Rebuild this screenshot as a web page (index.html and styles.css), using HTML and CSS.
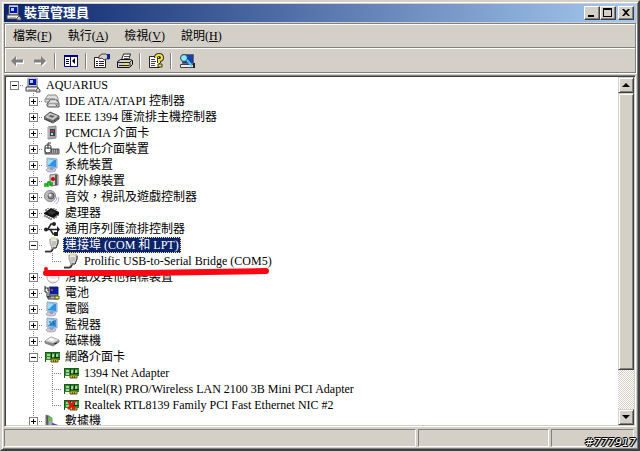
FILE: index.html
```html
<!DOCTYPE html>
<html lang="zh-Hant">

<head>
    <meta charset="UTF-8">
    <meta name="viewport" content="width=device-width, initial-scale=1">
    <title>裝置管理員</title>
    <link rel="stylesheet" href="styles.css">
</head>

<body>
    <!-- Icon shapes, reused through <use> -->
    <svg class="icon-defs" aria-hidden="true">
        <symbol id="i-pc" viewBox="0 0 16 16">
            <path d="M3 1h9v9H3z" fill="#d4d0c8" stroke="#666"/>
            <path d="M4 2h7v6H4z" fill="#0010c0"/>
            <path d="M5 3h3v3H5z" fill="#b0d0ff"/>
            <path d="M1 10h12v4H1z" fill="#eee" stroke="#444"/>
            <path d="M3 13h7" stroke="#777"/>
            <path d="M13 11l2 2v2h-4v-2z" fill="#ccc" stroke="#555"/>
            <path d="M3 1h9" stroke="#fff"/>
        </symbol>
        <symbol id="i-ide" viewBox="0 0 16 16">
            <path d="M1 6l3-4h8l2 3v4H1z" fill="#ddd" stroke="#888"/>
            <path d="M2 6h9" stroke="#777"/>
            <path d="M3 11l3-4h7l2 3v4H5l-2-1z" fill="#ccc" stroke="#555"/>
            <path d="M4 11h10" stroke="#777"/>
            <path d="M6 8h6M5 12h6" stroke="#fff"/>
            <path d="M12 12h1v1h-1z" fill="#080"/>
        </symbol>
        <symbol id="i-1394" viewBox="0 0 16 16">
            <path d="M0 8l6-5 9 4v3l-6 4-9-4z" fill="#777" stroke="#555"/>
            <path d="M1 8l5-4 8 3-5 4z" fill="#ccc"/>
            <path d="M4 7l3-1 4 1-3 2z" fill="#666"/>
            <path d="M2 10l6 3M10 12l4-3" stroke="#222" stroke-dasharray="1 1"/>
        </symbol>
        <symbol id="i-pcmcia" viewBox="0 0 16 16">
            <path d="M4 2l8-1v12l-8 1z" fill="#aaa" stroke="#888"/>
            <path d="M6 4h5v7H6z" fill="#345"/>
            <path d="M7 5h3v2H7z" fill="#b33"/>
            <path d="M7 8h2v2H7z" fill="#ccd"/>
            <path d="M4 2v11" stroke="#ddd"/>
        </symbol>
        <symbol id="i-hid" viewBox="0 0 16 16">
            <path d="M1 8h14v5H1z" fill="#aaa" stroke="#555"/>
            <path d="M7 9h8M7 11h8" stroke="#333" stroke-dasharray="1 1"/>
            <path d="M1 6q0-2 2-2h2q2 0 2 2v4q0 2-3 2t-3-2z" fill="#fff" stroke="#333"/>
            <path d="M4 4v4M1 7h6M4 4V2h3" fill="none" stroke="#333"/>
        </symbol>
        <symbol id="i-monitor" viewBox="0 0 16 16">
            <ellipse cx="7" cy="13" rx="5" ry="2" fill="#ccd" stroke="#aab"/>
            <path d="M6 10h3v3H6z" fill="#99b"/>
            <path d="M3 1l10 1v9L3 10z" fill="#b8d4ec" stroke="#8ab"/>
            <path d="M4 2l8 1v7L4 9z" fill="#2d93e8"/>
            <path d="M4 2l6 1-5 5H4z" fill="#a0dcff"/>
        </symbol>
        <symbol id="i-display" viewBox="0 0 16 16">
            <use href="#i-monitor"/>
            <path d="M5 5h5M6 7h5" stroke="#345" stroke-dasharray="2 1"/>
        </symbol>
        <symbol id="i-ir" viewBox="0 0 16 16">
            <path d="M6 2l6-1 2 1v10l-7 1-1-1z" fill="#ccc" stroke="#777"/>
            <path d="M12 2v10" stroke="#555" stroke-width="2"/>
            <circle cx="9" cy="6" r="2" fill="#c00"/>
            <path d="M1 14v-3h2v2h1v-4h2v3h2v-3" fill="none" stroke="#0a0" stroke-width="1.500"/>
        </symbol>
        <symbol id="i-sound" viewBox="0 0 16 16">
            <circle cx="6" cy="7" r="5.500" fill="#bbb" stroke="#888"/>
            <circle cx="7" cy="7" r="3" fill="#888" stroke="#555"/>
            <circle cx="6" cy="6" r="1.500" fill="#eee"/>
            <path d="M10 13q3-1 3-5M12 15q3-2 3-7" fill="none" stroke="#aac"/>
        </symbol>
        <symbol id="i-cpu" viewBox="0 0 16 16">
            <path d="M0 8l7-5 8 4v2l-6 4-9-4z" fill="#111"/>
            <path d="M3 8l4-3 5 2-4 3z" fill="#333"/>
            <path d="M1 10v2M3 11v2M5 12v2M7 13v2M10 12v2M12 11v2M14 9v2M4 4V3M2 6V4M10 4V3M12 5V4" stroke="#222"/>
        </symbol>
        <symbol id="i-usb" viewBox="0 0 16 16">
            <path d="M1 8.500h12M4 8l3-5h3M6 8l3 5h3" fill="none" stroke="#222" stroke-width="1.500"/>
            <circle cx="2" cy="8.500" r="2" fill="#222"/>
            <circle cx="10" cy="3" r="2" fill="#222"/>
            <path d="M13 5l3 3.500-3 3.500zM10 11h4v4h-4z" fill="#222"/>
        </symbol>
        <symbol id="i-plug" viewBox="0 0 16 16">
            <path d="M1 14.500h5q2 0 3-3" fill="none" stroke="#333" stroke-width="2"/>
            <path d="M1 13.500h5q1 0 2-3" fill="none" stroke="#bbb"/>
            <path d="M6 2h8v4l-2 5H8L6 6z" fill="#d8d6cc" stroke="#999"/>
            <path d="M7 0h5v2H7z" fill="#e6e2a8"/>
            <path d="M7 3h5" stroke="#fff"/>
            <path d="M9 4v5M11 4v4" stroke="#aaa"/>
            <path d="M14 3v3l-2 5H9" fill="none" stroke="#333"/>
        </symbol>
        <symbol id="i-mouse" viewBox="0 0 16 16">
            <ellipse cx="9" cy="8" rx="6" ry="6" fill="#e6e6e6" stroke="#aaa"/>
            <path d="M4 9q4 4 10 1" fill="none" stroke="#fff" stroke-width="2"/>
        </symbol>
        <symbol id="i-battery" viewBox="0 0 16 16">
            <path d="M5 2h9v8H5z" fill="#ccc" stroke="#334"/>
            <path d="M6 2h8v7H6z" fill="#0020a0"/>
            <path d="M7 4h2v2H7z" fill="#d33"/>
            <path d="M4 11h10v3H4z" fill="#bbb" stroke="#334"/>
            <path d="M1 1v6h2v5h4M1 3h3v3" fill="none" stroke="#222"/>
            <path d="M11 11h4v3h-4z" fill="#ee3" stroke="#553"/>
        </symbol>
        <symbol id="i-disk" viewBox="0 0 16 16">
            <path d="M1 8l6-4 8 3v2l-6 4-8-3z" fill="#888" stroke="#888"/>
            <path d="M1 8l6-4 8 3-6 3z" fill="#ddd"/>
            <path d="M4 7l3-2 4 2-3 1z" fill="#fff"/>
            <path d="M10 11l3-1" stroke="#222"/>
        </symbol>
        <symbol id="i-net" viewBox="0 0 16 16">
            <path d="M1 3h15v8H1z" fill="#2e8c2e"/>
            <path d="M1 3.500h15M1.500 3v10" fill="none" stroke="#1b5a1b"/>
            <path d="M3 5h3v2H3zM3 8h3v2H3zM8 5h2v3H8zM12 5h2v3h-2z" fill="#a4d494"/>
            <path d="M7.500 4v7M11.500 4v4M10 8.500h6" stroke="#083808"/>
            <path d="M7 10h7v3H7z" fill="#d8c030" stroke="#4c5a10"/>
            <path d="M9.500 11v2M11.500 11v2" stroke="#665500"/>
        </symbol>
        <symbol id="i-net-off" viewBox="0 0 16 16">
            <use href="#i-net"/>
            <path d="M5 4l7 8M12 4l-7 8" stroke="#e81010" stroke-width="2.500"/>
        </symbol>
        <symbol id="i-modem" viewBox="0 0 16 16">
            <path d="M2 2l3 1v10l-3-1z" fill="#555" stroke="#777"/>
            <path d="M5 3l3 2v5l6 3-2 3-8-2z" fill="#aab" stroke="#889"/>
            <circle cx="6" cy="6" r="2" fill="#5c3"/>
            <path d="M8 11l6 2" stroke="#558" stroke-width="2"/>
        </symbol>
        <symbol id="i-back" viewBox="0 0 16 16">
            <path d="M3 9l5-5v3h7v4H8v3z" fill="#fff"/>
            <path d="M2 8l5-5v3.500h7v3H7V13z" fill="#808080"/>
        </symbol>
        <symbol id="i-forward" viewBox="0 0 16 16">
            <path d="M15 9l-5-5v3H3v4h7v3z" fill="#fff"/>
            <path d="M14 8L9 3v3.500H2v3h7V13z" fill="#808080"/>
        </symbol>
        <symbol id="i-pane" viewBox="0 0 16 16">
            <path d="M1.500 2.500h13v11h-13z" fill="#fff" stroke="#000080"/>
            <path d="M1 3h14" stroke="#000080" stroke-width="2"/>
            <path d="M7.500 2v12" stroke="#000080"/>
            <path d="M3 6.500h3M3 8.500h3M3 10.500h3" stroke="#000"/>
            <path d="M12 5v6L9 8z" fill="#000"/>
        </symbol>
        <symbol id="i-props" viewBox="0 0 16 16">
            <path d="M.5 4.500h11v10H.5z" fill="#fff" stroke="#222"/>
            <path d="M2 8.500h2M5 8.500h5M2 10.500h2M5 10.500h5M2 12.500h2M5 12.500h5" stroke="#222"/>
            <path d="M5 3l3-2h4l1 1h2v4h-3l-2 1-2-2-3 1z" fill="#d4d0c8" stroke="#444"/>
            <path d="M13 1h3v5h-3z" fill="#0a2a90"/>
        </symbol>
        <symbol id="i-print" viewBox="0 0 16 16">
            <path d="M4.500 7l2-6h7l-2 6z" fill="#fff" stroke="#222"/>
            <path d="M7 3.500h5M7 5.500h4" stroke="#555"/>
            <path d="M.5 8.500l3-2h10l2 1v4l-3 3H.5z" fill="#ccc" stroke="#111"/>
            <path d="M1 9.500h12v4M13 9l2-2M2 12.500h10" fill="none" stroke="#222"/>
            <path d="M8 10h3v2H8z" fill="#ee0"/>
        </symbol>
        <symbol id="i-help" viewBox="0 0 16 16">
            <path d="M1.500 3.500h10v11h-10z" fill="#fff" stroke="#222"/>
            <path d="M3 6.500h4M3 8.500h5M3 10.500h4M3 12.500h4" stroke="#444"/>
            <path d="M8 5q0-3 3-3t3 3q0 2-3 2v3" fill="none" stroke="#333" stroke-width="4"/>
            <path d="M10 11h4v3h-4z" fill="#f5e43c" stroke="#333"/>
            <path d="M8 5q0-3 3-3t3 3q0 2-3 2v3" fill="none" stroke="#f5e43c" stroke-width="2"/>
        </symbol>
        <symbol id="i-scan" viewBox="0 0 16 16">
            <path d="M3.500 1.500h11v9h-11z" fill="#1440b0" stroke="#666"/>
            <path d="M1.500 11.500h13v3h-13z" fill="#eee" stroke="#444"/>
            <circle cx="5" cy="5" r="3.500" fill="#8ce8f4" stroke="#246"/>
            <path d="M8 7l5 6" stroke="#55c8f0" stroke-width="2"/>
            <path d="M15 10v5" stroke="#222" stroke-width="2"/>
        </symbol>
    </svg>

    <div class="window">
        <header class="title-bar">
            <svg class="icon"><use href="#i-pc"/></svg>
            <h1>裝置管理員</h1>
            <div class="window-buttons">
                <button type="button" aria-label="最小化"><svg viewBox="0 0 12 10"><path d="M2 7h6v2H2z"/></svg></button>
                <button type="button" aria-label="最大化"><svg viewBox="0 0 12 10"><path d="M1 0h9v9H1zM2 2v6h7V2z" fill-rule="evenodd"/></svg></button>
                <button type="button" class="close" aria-label="關閉"><svg viewBox="0 0 12 10"><path d="M2 1h2l2 2 2-2h2L7 4.500 10 8H8L6 6 4 8H2l3-3.500z"/></svg></button>
            </div>
        </header>

        <div class="bars">
            <nav class="menu-bar">
                <button type="button">檔案(<u>F</u>)</button>
                <button type="button">執行(<u>A</u>)</button>
                <button type="button">檢視(<u>V</u>)</button>
                <button type="button">說明(<u>H</u>)</button>
            </nav>
            <div class="tool-bar">
                <div class="tool-group">
                    <button type="button" aria-label="上一頁"><svg class="icon"><use href="#i-back"/></svg></button>
                    <button type="button" aria-label="下一頁"><svg class="icon"><use href="#i-forward"/></svg></button>
                </div>
                <div class="tool-group">
                    <button type="button" aria-label="顯示樹狀目錄"><svg class="icon"><use href="#i-pane"/></svg></button>
                </div>
                <div class="tool-group">
                    <button type="button" aria-label="內容"><svg class="icon"><use href="#i-props"/></svg></button>
                    <button type="button" aria-label="列印"><svg class="icon"><use href="#i-print"/></svg></button>
                </div>
                <div class="tool-group">
                    <button type="button" aria-label="說明"><svg class="icon"><use href="#i-help"/></svg></button>
                </div>
                <div class="tool-group">
                    <button type="button" aria-label="掃描硬體變更"><svg class="icon"><use href="#i-scan"/></svg></button>
                </div>
            </div>
        </div>

        <main class="view">
            <div class="tree-pane">
                <ul class="tree">
                    <li>
                        <div class="row"><button type="button" class="toggle open" aria-label="收合"></button><svg class="icon"><use href="#i-pc"/></svg><span class="label">AQUARIUS</span></div>
                        <ul>
                            <li><div class="row"><button type="button" class="toggle" aria-label="展開"></button><svg class="icon"><use href="#i-ide"/></svg><span class="label">IDE ATA/ATAPI 控制器</span></div></li>
                            <li><div class="row"><button type="button" class="toggle" aria-label="展開"></button><svg class="icon"><use href="#i-1394"/></svg><span class="label">IEEE 1394 匯流排主機控制器</span></div></li>
                            <li><div class="row"><button type="button" class="toggle" aria-label="展開"></button><svg class="icon"><use href="#i-pcmcia"/></svg><span class="label">PCMCIA 介面卡</span></div></li>
                            <li><div class="row"><button type="button" class="toggle" aria-label="展開"></button><svg class="icon"><use href="#i-hid"/></svg><span class="label">人性化介面裝置</span></div></li>
                            <li><div class="row"><button type="button" class="toggle" aria-label="展開"></button><svg class="icon"><use href="#i-monitor"/></svg><span class="label">系統裝置</span></div></li>
                            <li><div class="row"><button type="button" class="toggle" aria-label="展開"></button><svg class="icon"><use href="#i-ir"/></svg><span class="label">紅外線裝置</span></div></li>
                            <li><div class="row"><button type="button" class="toggle" aria-label="展開"></button><svg class="icon"><use href="#i-sound"/></svg><span class="label">音效，視訊及遊戲控制器</span></div></li>
                            <li><div class="row"><button type="button" class="toggle" aria-label="展開"></button><svg class="icon"><use href="#i-cpu"/></svg><span class="label">處理器</span></div></li>
                            <li><div class="row"><button type="button" class="toggle" aria-label="展開"></button><svg class="icon"><use href="#i-usb"/></svg><span class="label">通用序列匯流排控制器</span></div></li>
                            <li>
                                <div class="row"><button type="button" class="toggle open" aria-label="收合"></button><svg class="icon"><use href="#i-plug"/></svg><span class="label selected">連接埠 (COM 和 LPT)</span></div>
                                <ul>
                                    <li class="marked">
                                        <div class="row leaf"><svg class="icon"><use href="#i-plug"/></svg><span class="label">Prolific USB-to-Serial Bridge (COM5)</span></div>
                                        <svg class="red-line" viewBox="0 0 228 14"><path d="M4 9L100 9L224 7"/><circle cx="4" cy="5" r="2"/></svg>
                                    </li>
                                </ul>
                            </li>
                            <li><div class="row"><button type="button" class="toggle" aria-label="展開"></button><svg class="icon"><use href="#i-mouse"/></svg><span class="label">滑鼠及其他指標裝置</span></div></li>
                            <li><div class="row"><button type="button" class="toggle" aria-label="展開"></button><svg class="icon"><use href="#i-battery"/></svg><span class="label">電池</span></div></li>
                            <li><div class="row"><button type="button" class="toggle" aria-label="展開"></button><svg class="icon"><use href="#i-monitor"/></svg><span class="label">電腦</span></div></li>
                            <li><div class="row"><button type="button" class="toggle" aria-label="展開"></button><svg class="icon"><use href="#i-display"/></svg><span class="label">監視器</span></div></li>
                            <li><div class="row"><button type="button" class="toggle" aria-label="展開"></button><svg class="icon"><use href="#i-disk"/></svg><span class="label">磁碟機</span></div></li>
                            <li>
                                <div class="row"><button type="button" class="toggle open" aria-label="收合"></button><svg class="icon"><use href="#i-net"/></svg><span class="label">網路介面卡</span></div>
                                <ul>
                                    <li><div class="row leaf"><svg class="icon"><use href="#i-net"/></svg><span class="label">1394 Net Adapter</span></div></li>
                                    <li><div class="row leaf"><svg class="icon"><use href="#i-net"/></svg><span class="label">Intel(R) PRO/Wireless LAN 2100 3B Mini PCI Adapter</span></div></li>
                                    <li><div class="row leaf"><svg class="icon"><use href="#i-net-off"/></svg><span class="label">Realtek RTL8139 Family PCI Fast Ethernet NIC #2</span></div></li>
                                </ul>
                            </li>
                            <li class="more"><div class="row"><button type="button" class="toggle" aria-label="展開"></button><svg class="icon"><use href="#i-modem"/></svg><span class="label">數據機</span></div></li>
                        </ul>
                    </li>
                </ul>
            </div>
            <div class="scroll-bar">
                <button type="button" aria-label="向上捲動"><svg viewBox="0 0 8 4"><path d="M4 0l4 4H0z"/></svg></button>
                <div class="thumb"></div>
                <div class="track"></div>
                <button type="button" aria-label="向下捲動"><svg viewBox="0 0 8 4"><path d="M0 0h8L4 4z"/></svg></button>
            </div>
        </main>

        <footer class="status-bar">
            <div></div>
            <div></div>
            <div></div>
        </footer>
        <span class="stamp">#777917</span>
    </div>
</body>

</html>
```
FILE: styles.css
```css
* {
    box-sizing: border-box;
}

body {
    margin: 0;
    background: #d4d0c8;
    color: #000;
    font-family: "Liberation Serif", "Noto Sans CJK TC", serif;
    font-size: 12px;
}

button {
    margin: 0;
    padding: 0;
    border: none;
    background: none;
    color: inherit;
    font: inherit;
}

.icon-defs {
    display: none;
}

.icon {
    display: block;
    flex: none;
    width: 16px;
    height: 16px;
}

.window {
    position: relative;
    display: flex;
    flex-direction: column;
    height: 100vh;
    padding: 2px;
    border: 2px solid #d4d0c8;
    border-right-color: #404040;
    border-bottom-color: #404040;
    box-shadow: inset 1px 1px #fff, inset -1px -1px #808080;
}

/* Title bar */
.title-bar {
    display: flex;
    align-items: center;
    flex: none;
    height: 18px;
    padding: 0 2px;
    background: linear-gradient(to right, #0a246a, #a6caf0);
}

.title-bar h1 {
    flex: 1;
    margin: 0 0 0 2px;
    color: #fff;
    font-size: 13px;
    font-weight: bold;
    line-height: 18px;
}

.window-buttons {
    display: flex;
}

.window-buttons button {
    display: grid;
    place-items: center;
    width: 16px;
    height: 14px;
    border: 1px solid #fff;
    border-right-color: #404040;
    border-bottom-color: #404040;
    background: #d4d0c8;
    box-shadow: inset -1px -1px #808080;
}

.window-buttons .close {
    margin-left: 2px;
}

.window-buttons svg {
    width: 12px;
    height: 10px;
}

/* Menu and tool bar */
.bars {
    flex: none;
    margin: 1px 0 2px;
    border: 1px solid #808080;
    box-shadow: inset 1px 1px #fff, 1px 1px #fff;
}

.menu-bar {
    display: flex;
    gap: 16px;
    height: 24px;
    padding: 0 8px 1px;
    border-bottom: 1px solid #808080;
}

.tool-bar {
    display: flex;
    align-items: center;
    height: 24px;
    padding: 0 4px;
    border-top: 1px solid #fff;
}

.tool-group {
    display: flex;
    gap: 7px;
    padding: 0 6px 0 7px;
    border-left: 1px solid #fff;
    border-right: 1px solid #808080;
}

.tool-group:first-child {
    padding-left: 0;
    border-left: none;
}

.tool-group:last-child {
    border-right: none;
}

/* Device tree */
.view {
    display: flex;
    flex: 1;
    min-height: 0;
    padding: 1px;
    border: 1px solid #808080;
    border-right-color: #fff;
    border-bottom-color: #fff;
    background: #fff;
    box-shadow: inset 1px 1px #404040, inset -1px -1px #d4d0c8;
}

.tree-pane {
    flex: 1;
    min-width: 0;
    overflow: hidden;
}

.tree,
.tree ul {
    margin: 0;
    padding: 0;
    list-style: none;
}

.tree ul {
    margin-left: 19px;
}

.tree ul li {
    background: repeating-linear-gradient(#808080 0 1px, transparent 1px 2px) 8px 0 / 1px 100% no-repeat;
}

.tree ul li:last-child {
    background-size: 1px 8px;
}

.tree ul li.more {
    background-size: 1px 100%;
}

.row {
    display: flex;
    align-items: center;
    height: 16px;
    padding-left: 4px;
    background: repeating-linear-gradient(to right, #808080 0 1px, transparent 1px 2px) 8px 8px / 10px 1px no-repeat;
}

.leaf {
    padding-left: 19px;
}

.toggle {
    flex: none;
    width: 9px;
    height: 9px;
    margin-right: 6px;
    border: 1px solid #808080;
    background:
        linear-gradient(#000, #000) center / 5px 1px no-repeat,
        linear-gradient(#000, #000) center / 1px 5px no-repeat,
        #fff;
}

.toggle.open {
    background: linear-gradient(#000, #000) center / 5px 1px no-repeat, #fff;
}

.label {
    margin-left: 3px;
    padding: 0 2px;
    line-height: 16px;
    white-space: nowrap;
}

.selected {
    background: #0a246a;
    color: #fff;
    outline: 1px dotted #f5db95;
    outline-offset: -1px;
}

.marked {
    position: relative;
}

.red-line {
    position: absolute;
    top: 11px;
    left: -2px;
    width: 228px;
    height: 14px;
    fill: #fb0713;
}

.red-line path {
    stroke: #fb0713;
    stroke-width: 6px;
    stroke-linecap: round;
}

/* Scroll bar */
.scroll-bar {
    display: flex;
    flex-direction: column;
    flex: none;
    width: 16px;
}

.scroll-bar button,
.thumb {
    flex: none;
    border: 1px solid #d4d0c8;
    border-right-color: #404040;
    border-bottom-color: #404040;
    background: #d4d0c8;
    box-shadow: inset 1px 1px #fff, inset -1px -1px #808080;
}

.scroll-bar button {
    display: grid;
    place-items: center;
    height: 16px;
}

.scroll-bar svg {
    width: 8px;
    height: 4px;
}

.thumb {
    flex: 7 1 0;
}

.track {
    flex: 1 1 0;
    background: repeating-conic-gradient(#fff 0 25%, #d4d0c8 0 50%) 0 0 / 2px 2px;
}

/* Status bar */
.status-bar {
    display: grid;
    grid-template-columns: 1fr 131px 83px;
    gap: 2px;
    flex: none;
    height: 20px;
    padding: 2px 2px 0 0;
}

.status-bar div {
    border: 1px solid #808080;
    border-right-color: #fff;
    border-bottom-color: #fff;
}

.stamp {
    position: absolute;
    right: 2px;
    bottom: 0;
    color: #fff;
    font-family: "DejaVu Sans", sans-serif;
    font-size: 11px;
    font-style: italic;
    line-height: 13px;
    text-shadow: 1px 0 #000, -1px 0 #000, 0 1px #000, 0 -1px #000, 1px 1px #000, -1px -1px #000;
}
```
